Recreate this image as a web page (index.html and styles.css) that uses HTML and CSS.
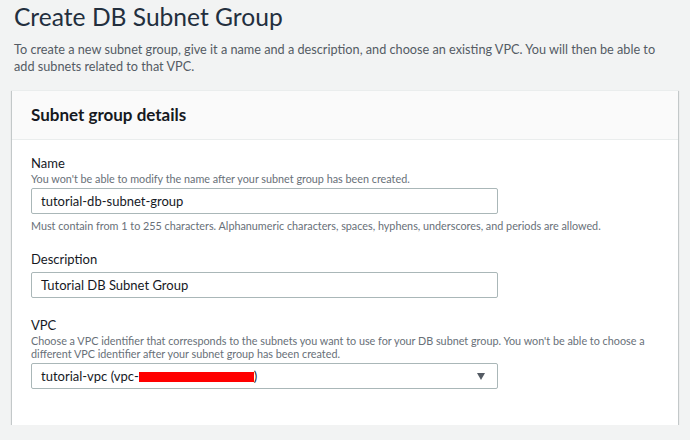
FILE: index.html
```html
<!DOCTYPE html>
<html lang="en">
<head>
<meta charset="utf-8">
<title>Create DB Subnet Group</title>
<link rel="stylesheet" href="styles.css">
</head>
<body>
<div class="page">
  <h1 class="title">Create DB Subnet Group</h1>
  <p class="intro">To create a new subnet group, give it a name and a description, and choose an existing VPC. You will then be able to add subnets related to that VPC.</p>
  <section class="card">
    <div class="card-header">Subnet group details</div>
    <div class="card-body">
      <div class="field">
        <div class="label">Name</div>
        <div class="hint">You won't be able to modify the name after your subnet group has been created.</div>
        <div class="input">tutorial-db-subnet-group</div>
        <div class="constraint">Must contain from 1 to 255 characters. Alphanumeric characters, spaces, hyphens, underscores, and periods are allowed.</div>
      </div>
      <div class="field">
        <div class="label">Description</div>
        <div class="input">Tutorial DB Subnet Group</div>
      </div>
      <div class="field">
        <div class="label">VPC</div>
        <div class="hint">Choose a VPC identifier that corresponds to the subnets you want to use for your DB subnet group. You won't be able to choose a different VPC identifier after your subnet group has been created.</div>
        <div class="input select">
          <span>tutorial-vpc (vpc-<span class="redact"></span>)</span>
          <svg class="caret" width="8" height="7" viewBox="0 0 8 7"><path d="M0 0 L8 0 L4 7 Z" fill="#545b64"/></svg>
        </div>
      </div>
    </div>
  </section>
</div>
</body>
</html>
```

FILE: styles.css
```css
html, body {
  margin: 0;
  padding: 0;
  background: #f2f3f3;
}
body {
  font-family: Lato, "Open Sans", sans-serif;
  color: #16191f;
}
.page {
  padding: 0 12px 0 12px;
}
.title {
  margin: 0;
  padding: 1px 0 0 2px;
  font-size: 24.6px;
  font-weight: 400;
  line-height: 32px;
  color: #232f3e;
}
.intro {
  margin: 8px 0 0 2px;
  font-size: 12.7px;
  line-height: 17px;
  color: #545b64;
}
.card {
  margin-top: 15px;
  width: 666px;
  background: #fff;
  box-shadow: 0 1px 1px 0 rgba(0,28,36,.3), 1px 1px 1px 0 rgba(0,28,36,.15), -1px 1px 1px 0 rgba(0,28,36,.15);
  border-top: 1px solid #eaeded;
}
.card-header {
  height: 49px;
  box-sizing: border-box;
  padding: 13px 19px 0;
  background: #fafafa;
  border-bottom: 1px solid #eaeded;
  font-size: 17px;
  font-weight: 700;
  line-height: 22px;
  color: #16191f;
}
.card-body {
  padding: 15px 19px 36px;
  display: flex;
  flex-direction: column;
  gap: 19px;
}
.field {
  display: flex;
  flex-direction: column;
}
.label {
  font-size: 13px;
  line-height: 16px;
  color: #16191f;
}
.hint {
  font-size: 10.8px;
  line-height: 13px;
  color: #687078;
  margin-top: 1px;
  margin-bottom: 3px;
}
.field > .label + .input {
  margin-top: 5px;
}
.input {
  width: 467px;
  height: 26px;
  box-sizing: border-box;
  border: 1px solid #aab7b8;
  border-radius: 2px;
  padding: 0 9px;
  display: flex;
  align-items: center;
  font-size: 13px;
  color: #16191f;
  background: #fff;
}
.constraint {
  margin-top: 5px;
  font-size: 10.8px;
  line-height: 13px;
  color: #687078;
}
.select {
  justify-content: space-between;
}
.redact {
  display: inline-block;
  width: 115px;
  height: 10px;
  background: #ff0000;
  vertical-align: -1px;
}
.caret {
  margin-right: 3px;
}
```
